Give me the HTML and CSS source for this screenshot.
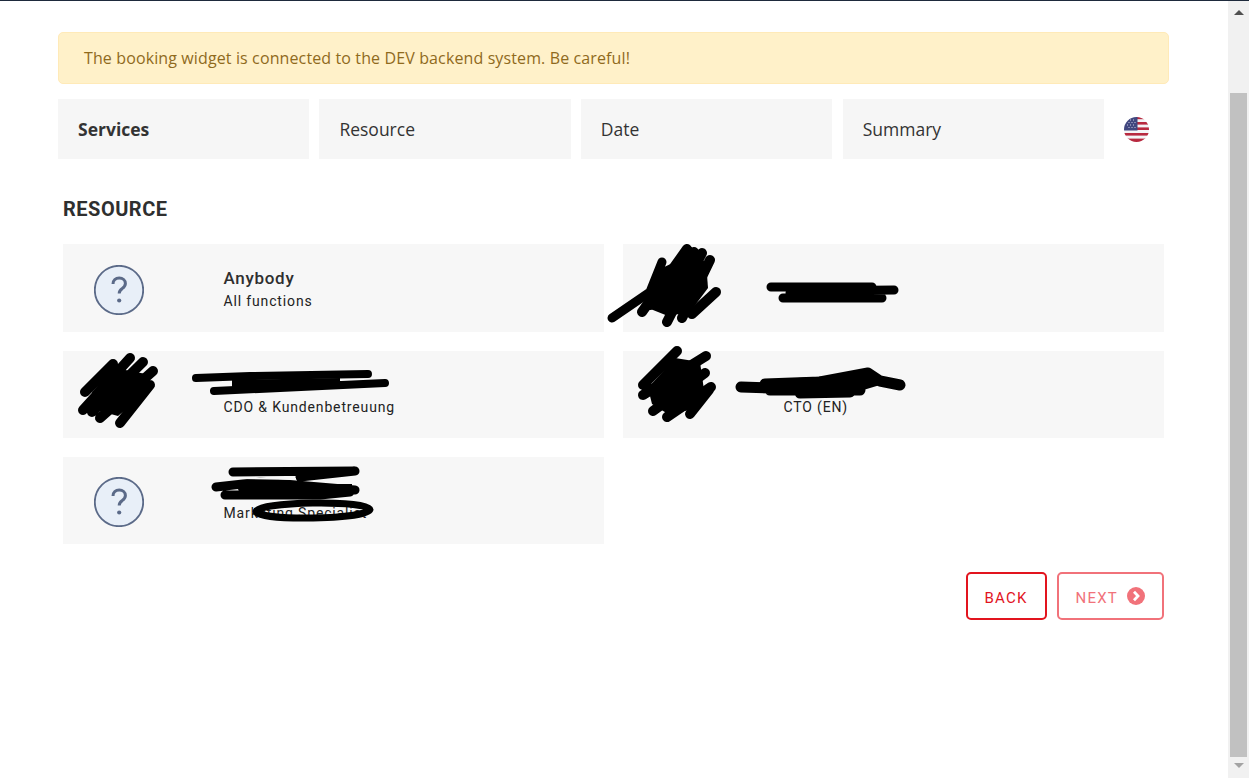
FILE: index.html
```html
<!DOCTYPE html>
<html lang="en">
<head>
<meta charset="utf-8">
<title>Booking widget</title>
<link rel="stylesheet" href="styles.css">
</head>
<body>
<div class="window">
  <main class="page">
    <div class="alert">The booking widget is connected to the DEV backend system. Be careful!</div>
    <nav class="steps">
      <div class="step step-active">Services</div>
      <div class="step">Resource</div>
      <div class="step">Date</div>
      <div class="step step-last">Summary</div>
      <svg class="flag" viewBox="0 0 25 25" width="25" height="25" aria-label="English">
        <defs><clipPath id="flag-clip"><circle cx="12.5" cy="12.5" r="12.5"/></clipPath></defs>
        <g clip-path="url(#flag-clip)">
          <rect width="25" height="25" fill="#f4f4f6"/>
          <rect x="12" y="0" width="13" height="2.2" fill="#b8293f"/>
          <rect x="12" y="5" width="13" height="2.6" fill="#b8293f"/>
          <rect x="12" y="10.4" width="13" height="2.6" fill="#b8293f"/>
          <rect x="0" y="16" width="25" height="2.6" fill="#b8293f"/>
          <rect x="0" y="21.6" width="25" height="3.4" fill="#b8293f"/>
          <rect width="13.5" height="13.5" fill="#41477f"/>
          <path d="M3 8h1M6 8h1M9 8h1M4.500 10.500h1M7.500 10.500h1M10.500 10.500h1M4.500 5.500h1M7.500 5.500h1M10.500 5.500h1M6 3h1M9 3h1" stroke="#c9cbe0" stroke-width="1"/>
        </g>
      </svg>
    </nav>
    <section class="resources">
      <h2 class="title">RESOURCE</h2>
      <div class="cards">
        <article class="card">
          <svg class="unknown" viewBox="0 0 50 50" width="50" height="50">
            <circle cx="25" cy="25" r="24.2" fill="#e8eff8" stroke="#5b6a88" stroke-width="1.800"/>
            <path d="M19 19c0-3.600 2.700-6 6.200-6 3.600 0 6.200 2.300 6.200 5.400 0 2.700-1.600 3.900-3.400 5.300-1.700 1.300-2.800 2.400-2.800 4.800" fill="none" stroke="#5b6a88" stroke-width="3"/>
            <circle cx="25.200" cy="35.500" r="2.100" fill="#5b6a88"/>
          </svg>
          <div class="info"><div class="name">Anybody</div><div class="role">All functions</div></div>
        </article>
        <article class="card">
          <div class="info"><div class="name">&nbsp;</div><div class="role">&nbsp;</div></div>
        </article>
        <article class="card">
          <div class="info"><div class="name">&nbsp;</div><div class="role">CDO &amp; Kundenbetreuung</div></div>
        </article>
        <article class="card">
          <div class="info"><div class="name">&nbsp;</div><div class="role">CTO (EN)</div></div>
        </article>
        <article class="card">
          <svg class="unknown" viewBox="0 0 50 50" width="50" height="50">
            <circle cx="25" cy="25" r="24.2" fill="#e8eff8" stroke="#5b6a88" stroke-width="1.800"/>
            <path d="M19 19c0-3.600 2.700-6 6.200-6 3.600 0 6.200 2.300 6.200 5.400 0 2.700-1.600 3.900-3.400 5.300-1.700 1.300-2.800 2.400-2.800 4.800" fill="none" stroke="#5b6a88" stroke-width="3"/>
            <circle cx="25.200" cy="35.500" r="2.100" fill="#5b6a88"/>
          </svg>
          <div class="info"><div class="name">&nbsp;</div><div class="role">Marketing Specialist</div></div>
        </article>
      </div>
      <div class="actions">
        <button class="btn" type="button">BACK</button>
        <button class="btn btn-disabled" type="button">NEXT
          <svg viewBox="0 0 18 18" width="18" height="18"><circle cx="9" cy="9" r="9" fill="#f1727a"/><path d="M7 4.800 11 9l-4 4.200" fill="none" stroke="#fff" stroke-width="2.800"/></svg>
        </button>
      </div>
    </section>
  </main>
  <div class="scrollbar">
    <span class="arrow-up"></span>
    <div class="thumb"></div>
    <span class="arrow-down"></span>
  </div>
  <svg class="scribbles" width="1249" height="778" viewBox="0 0 1249 778" aria-hidden="true">
    <g fill="#000">
      <polygon points="662,268 690,255 706,262 708,288 690,312 668,316 648,308 650,292"/>
      <polygon points="115,368 146,374 142,396 118,416 96,410 92,392"/>
      <polygon points="675,358 700,362 704,390 690,410 668,414 652,404 648,388"/>
      <polygon points="232,380 340,378 340,386 232,390"/>
      <polygon points="762,380 868,374 880,385 850,394 770,392"/>
      <polygon points="236,484 352,484 352,494 240,494"/>
    </g>
    <g fill="none" stroke="#000" stroke-linecap="round" stroke-linejoin="round">
      <path stroke-width="9" d="M612 318 650 292 662 262"/>
      <path stroke-width="10" d="M642 312 687 249M667 322 702 253M682 318 710 260M692 314 716 292M650 305 694 252"/>
      <path stroke-width="9" d="M771 287H872M800 291 894 290M783 298H882M790 293H870"/>
      <path stroke-width="10" d="M83 410 130 358M85 392 113 364M100 418 153 371M120 423 150 385M92 412 143 362"/>
      <path stroke-width="8" d="M196 378 250 376 368 374M214 391 385 383"/>
      <path stroke-width="10" d="M643 385 677 351M643 395 706 356M653 411 705 373M667 417 711 387M690 414 709 390"/>
      <path stroke-width="11" d="M741 387 770 388M765 384 820 382 868 373 880 381 900 385M770 390H860M800 393 850 392"/>
      <path stroke-width="9" d="M233 472 355 471 300 477M216 487 260 482 355 490M225 495 320 495 350 492"/>
      <ellipse stroke-width="7" cx="313" cy="510.500" rx="57" ry="7.500" transform="rotate(-1 313 510)"/>
    </g>
    <path fill="none" stroke="#f7f7f7" stroke-width="2" d="M241 478 296 479"/>
  </svg>
</div>
</body>
</html>
```

FILE: styles.css
```css
* { box-sizing: border-box; }
html, body { margin: 0; height: 100%; overflow: hidden; background: #fff; }
.window {
  position: relative;
  display: flex;
  height: 778px;
  border-top: 1px solid #1e2a3c;
}
.page {
  flex: 1;
  min-width: 0;
  padding: 31px 59px 0 58px;
  font-family: "Open Sans", sans-serif;
  color: #333;
}
.alert {
  height: 52px;
  display: flex;
  align-items: center;
  padding: 0 25px;
  font-size: 16px;
  letter-spacing: .12px;
  color: #8f6a1d;
  background: #fff1c9;
  border: 1px solid #ffeab8;
  border-radius: 5px;
}
.steps {
  display: grid;
  grid-template-columns: 251.4px 251.4px 251.4px 261.4px 25px;
  column-gap: 10px;
  align-items: center;
  margin-top: 15px;
}
.step {
  height: 60px;
  display: flex;
  align-items: center;
  padding: 0 20px;
  font-size: 17.5px;
  background: #f6f6f6;
}
.step-active { font-weight: 700; }
.step-last { margin-left: .6px; }
.flag { margin-left: 10px; }
.resources { padding: 0 5px; font-family: Roboto, sans-serif; }
.title {
  margin: 36px 0 0;
  font-size: 20px;
  line-height: 28px;
  font-weight: 700;
  letter-spacing: .5px;
  color: #2f2f2f;
}
.cards {
  display: grid;
  grid-template-columns: 541px 541px;
  column-gap: 19px;
  row-gap: 19px;
  grid-auto-rows: 87.25px;
  margin-top: 21.3px;
}
.card {
  position: relative;
  display: flex;
  flex-direction: column;
  justify-content: center;
  padding: 2px 0 0 160.5px;
  background: #f7f7f7;
}
.unknown { position: absolute; left: 31px; top: 20.5px; }
.name {
  font-size: 17px;
  font-weight: 500;
  line-height: 22px;
  letter-spacing: .7px;
  color: #2f2f2f;
}
.role {
  margin-top: 2px;
  font-size: 14px;
  line-height: 20px;
  letter-spacing: .85px;
  color: #222;
}
.actions {
  display: flex;
  justify-content: flex-end;
  gap: 10px;
  margin-top: 28px;
}
.btn {
  display: flex;
  align-items: center;
  justify-content: center;
  gap: 9px;
  height: 48px;
  padding: 4px 17px 0;
  font-family: Roboto, sans-serif;
  font-size: 15px;
  letter-spacing: 1.2px;
  color: #e2141e;
  background: #fff;
  border: 2px solid #e2141e;
  border-radius: 5px;
}
.btn svg { margin-top: -5px; }
.btn-disabled { color: #f1727a; border-color: #f1727a; }
.scrollbar {
  flex: 0 0 21px;
  display: flex;
  flex-direction: column;
  align-items: center;
  background: #f1f1f1;
}
.arrow-up {
  margin-top: 9px;
  border: 5px solid transparent;
  border-top: 0;
  border-bottom: 5px solid #505050;
}
.thumb {
  width: 17px;
  height: 664px;
  margin-top: 78px;
  background: #c1c1c1;
}
.arrow-down {
  margin-top: 6px;
  border: 5px solid transparent;
  border-bottom: 0;
  border-top: 5px solid #a3a3a3;
}
.scribbles { position: absolute; left: 0; top: -1px; pointer-events: none; }
```
